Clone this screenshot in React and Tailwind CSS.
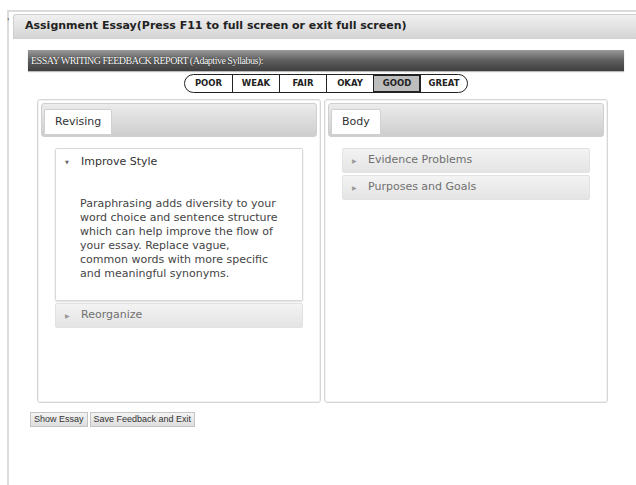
import React from 'react';

const ratings = ['POOR', 'WEAK', 'FAIR', 'OKAY', 'GOOD', 'GREAT'];

function RatingBar({ active }) {
  return (
    <div className="flex justify-center mt-[3px]">
      <div className="flex h-[19px] border-[1.5px] border-[#222] rounded-full overflow-hidden bg-white">
        {ratings.map((r, i) => (
          <div
            key={r}
            className={`w-[47px] flex items-center justify-center text-[8.5px] font-bold text-[#222] ${
              i > 0 ? 'border-l border-[#222]' : ''
            } ${r === active ? 'bg-[#bdbdbd] outline-[1.5px] outline-[#222] -outline-offset-1' : ''}`}
          >
            {r}
          </div>
        ))}
      </div>
    </div>
  );
}

function Panel({ tab, children }) {
  return (
    <div className="w-[284px] h-[304px] border border-[#d6d6d6] rounded-[3px] p-[3px] bg-white shadow-[inset_0_0_0_1px_#f2f2f2]">
      <div className="h-[34px] rounded-[3px] border border-[#cfcfcf] bg-gradient-to-b from-[#ececec] to-[#cdcdcd] flex items-end pl-[2px] pb-[1px]">
        <div className="h-[26px] px-[10px] flex items-center bg-white border border-[#d0d0d0] rounded-t-[2px] text-[11px] text-[#333]">
          {tab}
        </div>
      </div>
      <div className="px-[14px] pt-[11px]">{children}</div>
    </div>
  );
}

function ClosedItem({ label }) {
  return (
    <div className="h-[25px] flex items-center pl-[9px] border border-[#e2e2e2] rounded-[2px] bg-gradient-to-b from-[#f3f3f3] to-[#e4e4e4] text-[11px] text-[#707070]">
      <span className="text-[6px] text-[#999] w-[16px]">▶</span>
      {label}
    </div>
  );
}

export default function App() {
  return (
    <div className="w-[636px] h-[485px] bg-white overflow-hidden font-['DejaVu_Sans',Verdana,sans-serif]">
      <div className="relative mt-[10px] ml-[7px] h-[475px] border-l-2 border-t-2 border-[#dcdcdc]">
        <span className="absolute -left-[2px] top-[6px] text-[9px] text-[#555] leading-none">'</span>

        {/* title strip */}
        <div className="ml-[4px] mt-[2px] h-[25px] flex items-center pl-[11px] rounded-tl-[3px] border border-r-0 border-[#cfcfcf] bg-gradient-to-b from-[#f0f0f0] to-[#d5d5d5]">
          <span className="text-[11px] font-bold text-[#222]">
            Assignment Essay(Press F11 to full screen or exit full screen)
          </span>
        </div>

        <div className="pl-[19px] w-[615px]">
          {/* report banner */}
          <div className="mt-[11px] h-[21px] flex items-center pl-[3px] bg-gradient-to-b from-[#9a9a9a] via-[#5e5e5e] to-[#3f3f3f] shadow-[0_1px_1px_#bbb]">
            <span className="font-['Liberation_Serif',serif] text-[10px] tracking-[-0.5px] text-white [text-shadow:0_0_1px_#000]">
              ESSAY WRITING FEEDBACK REPORT (Adaptive Syllabus):
            </span>
          </div>

          <RatingBar active="GOOD" />

          <div className="flex gap-[3px] ml-[9px] mt-[6px]">
            <Panel tab="Revising">
              <div className="border border-[#d8d8d8] rounded-[2px] shadow-[0_1px_2px_#ddd]">
                <div className="h-[27px] flex items-center pl-[9px] text-[11px] text-[#333]">
                  <span className="text-[5px] text-[#666] w-[16px]">▼</span>
                  Improve Style
                </div>
                <div className="pl-[24px] pr-[20px] pt-[21px] h-[124px] text-[11px] leading-[14px] text-[#444]">
                  Paraphrasing adds diversity to your word choice and sentence structure which can help improve the flow of your essay. Replace vague,
                  <br />
                  common words with more specific and meaningful synonyms.
                </div>
              </div>
              <div className="mt-[2px]">
                <ClosedItem label="Reorganize" />
              </div>
            </Panel>
            <Panel tab="Body">
              <div className="flex flex-col gap-[2px]">
                <ClosedItem label="Evidence Problems" />
                <ClosedItem label="Purposes and Goals" />
              </div>
            </Panel>
          </div>

          <div className="flex gap-[2px] mt-[9px] ml-[2px] font-['Liberation_Sans',Arial,sans-serif]">
            <button className="h-[15px] px-[3px] text-[9px] text-[#333] border border-[#c4c4c4] bg-gradient-to-b from-[#f4f4f4] to-[#dedede] leading-none">
              Show Essay
            </button>
            <button className="h-[15px] px-[3px] text-[9px] text-[#333] border border-[#c4c4c4] bg-gradient-to-b from-[#f4f4f4] to-[#dedede] leading-none">
              Save Feedback and Exit
            </button>
          </div>
        </div>
      </div>
    </div>
  );
}
